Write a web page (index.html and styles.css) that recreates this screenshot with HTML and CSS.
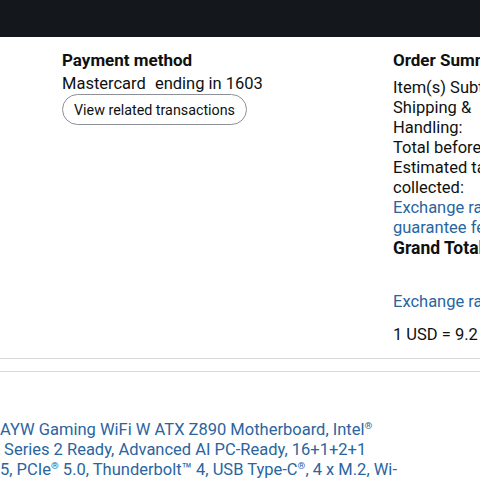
FILE: index.html
```html
<!DOCTYPE html>
<html lang="en">
<head>
<meta charset="utf-8">
<link rel="stylesheet" href="styles.css">
</head>
<body>
<header class="topbar"></header>
<main class="details">
  <section class="payment">
    <h2 class="heading">Payment method</h2>
    <p class="card">Mastercard <span class="ending">ending in 1603</span></p>
    <button class="pill">View related transactions</button>
  </section>
  <section class="summary">
    <h2 class="heading">Order Summary</h2>
    <ul class="lines">
      <li>Item(s) Subtotal:</li>
      <li>Shipping &amp;<br>Handling:</li>
      <li>Total before tax:</li>
      <li>Estimated tax to be<br>collected:</li>
      <li class="link">Exchange rate<br>guarantee fee:</li>
      <li class="grand">Grand Total:</li>
    </ul>
    <p class="link rate-link">Exchange rate guarantee</p>
    <p class="rate">1 USD = 9.2</p>
  </section>
</main>
<hr class="rule">
<hr class="rule second">
<section class="item">
  <div class="title">
    <div class="tline"><span class="pre">ASUS ROG Strix Z890-</span><span>AYW Gaming WiFi W ATX Z890 Motherboard, Intel<span class="reg">®</span></span></div>
    <div class="tline"><span class="pre">Core™ Ultra Processors (</span><span>&nbsp;Series 2 Ready, Advanced AI PC-Ready, 16+1+2+1</span></div>
    <div class="tline"><span class="pre">Power Stages, DDR</span><span>5, PCIe<span class="reg">®</span> 5.0, Thunderbolt™ 4, USB Type-C<span class="reg">®</span>, 4 x M.2, Wi-</span></div>
  </div>
</section>
</body>
</html>
```
FILE: styles.css
```css
* { box-sizing: border-box; }
html, body { margin: 0; padding: 0; }
body {
  width: 480px;
  height: 480px;
  overflow: hidden;
  background: #fff;
  color: #0f1111;
  font-family: Roboto, "Noto Sans", sans-serif;
  font-size: 16.5px;
  line-height: 20px;
}
.topbar {
  height: 37px;
  background: #14171c;
}
.details {
  display: flex;
  padding: 13px 0 0 62px;
  white-space: nowrap;
}
.payment {
  width: 331px;
  flex: none;
}
.summary {
  flex: none;
}
.heading {
  margin: 0;
  font-size: 17px;
  font-weight: 700;
  line-height: 20px;
}
.card {
  margin: 4px 0 0;
  line-height: 20px;
}
.ending { margin-left: 5px; }
.pill {
  margin-top: 0;
  height: 31px;
  padding: 0 11px;
  border: 1px solid #8d9096;
  border-radius: 16px;
  background: #fff;
  color: #0f1111;
  font-family: inherit;
  font-size: 14.3px;
}
.lines {
  list-style: none;
  margin: 8px 0 0;
  padding: 0;
}
.link { color: #2a65a0; }
.grand {
  font-weight: 700;
  font-size: 17.5px;
}
.rate-link { margin: 34px 0 0; }
.rate { margin: 13px 0 0; }
.rule {
  margin: 0;
  border: 0;
  border-top: 1px solid #d5d9d9;
}
.details + .rule { margin-top: 13px; }
.second { margin-top: 12px; }
.item {
  padding-top: 48px;
}
.title {
  margin-left: -200px;
  font-size: 16.5px;
  line-height: 20px;
  color: #2a65a0;
  white-space: nowrap;
}
.tline { display: flex; }
.pre {
  width: 200px;
  flex: none;
  display: flex;
  justify-content: flex-end;
  overflow: hidden;
}
.reg {
  font-size: 0.6em;
  line-height: 0;
  vertical-align: 0.6em;
}
```
